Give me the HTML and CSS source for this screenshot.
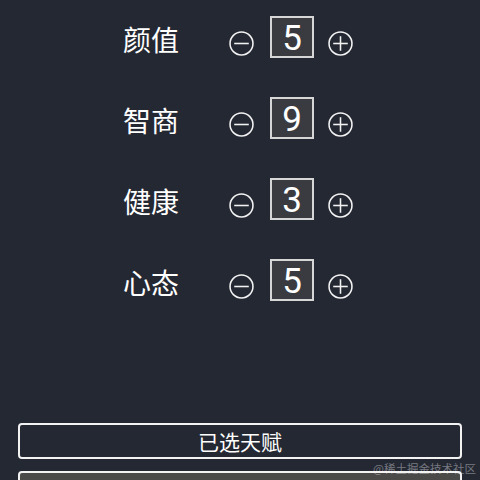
FILE: index.html
```html
<!DOCTYPE html>
<html lang="zh">
<head>
<meta charset="utf-8">
<link rel="stylesheet" href="styles.css">
</head>
<body>
<div class="page">
  <div class="rows">
    <div class="row">
      <span class="label">颜值</span>
      <svg class="btn minus" viewBox="0 0 24 24"><circle cx="12" cy="12" r="11" /><line x1="5" y1="12" x2="19" y2="12" /></svg>
      <span class="val">5</span>
      <svg class="btn plus" viewBox="0 0 24 24"><circle cx="12" cy="12" r="11" /><line x1="5" y1="12" x2="19" y2="12" /><line x1="12" y1="5" x2="12" y2="19" /></svg>
    </div>
    <div class="row">
      <span class="label">智商</span>
      <svg class="btn minus" viewBox="0 0 24 24"><circle cx="12" cy="12" r="11" /><line x1="5" y1="12" x2="19" y2="12" /></svg>
      <span class="val">9</span>
      <svg class="btn plus" viewBox="0 0 24 24"><circle cx="12" cy="12" r="11" /><line x1="5" y1="12" x2="19" y2="12" /><line x1="12" y1="5" x2="12" y2="19" /></svg>
    </div>
    <div class="row">
      <span class="label">健康</span>
      <svg class="btn minus" viewBox="0 0 24 24"><circle cx="12" cy="12" r="11" /><line x1="5" y1="12" x2="19" y2="12" /></svg>
      <span class="val">3</span>
      <svg class="btn plus" viewBox="0 0 24 24"><circle cx="12" cy="12" r="11" /><line x1="5" y1="12" x2="19" y2="12" /><line x1="12" y1="5" x2="12" y2="19" /></svg>
    </div>
    <div class="row">
      <span class="label">心态</span>
      <svg class="btn minus" viewBox="0 0 24 24"><circle cx="12" cy="12" r="11" /><line x1="5" y1="12" x2="19" y2="12" /></svg>
      <span class="val">5</span>
      <svg class="btn plus" viewBox="0 0 24 24"><circle cx="12" cy="12" r="11" /><line x1="5" y1="12" x2="19" y2="12" /><line x1="12" y1="5" x2="12" y2="19" /></svg>
    </div>
  </div>
  <div class="actions">
    <div class="action">已选天赋</div>
    <div class="action primary">今天开始重开我的精彩人生</div>
  </div>
  <div class="watermark">@稀土掘金技术社区</div>
</div>
</body>
</html>
```
FILE: styles.css
```css
html, body {
  margin: 0;
  padding: 0;
  background: #242833;
}
.page {
  position: relative;
  width: 480px;
  height: 480px;
  overflow: hidden;
  background: #242833;
  font-family: "Noto Sans CJK SC", "Noto Sans", sans-serif;
  color: #ffffff;
}
.rows {
  display: flex;
  flex-direction: column;
}
.row {
  height: 81px;
  display: flex;
  align-items: center;
  padding-left: 123px;
}
.label {
  width: 56px;
  font-size: 28px;
  line-height: 1;
  white-space: nowrap;
  margin-bottom: 4px;
}
.btn {
  width: 25px;
  height: 25px;
  fill: none;
  stroke: #f2f2f2;
  stroke-width: 1.5;
  margin-top: 6px;
}
.minus {
  margin-left: 50px;
}
.val {
  box-sizing: border-box;
  width: 44px;
  height: 42px;
  margin: 0 14px 7px 16px;
  padding-top: 3px;
  border: 2px solid #d6d6d6;
  background: #3a3b40;
  display: flex;
  align-items: center;
  justify-content: center;
  font-family: Roboto, "Liberation Sans", sans-serif;
  font-size: 35px;
  line-height: 34px;
  color: #ffffff;
}
.actions {
  margin-top: 99px;
  padding: 0 18px;
  display: flex;
  flex-direction: column;
  gap: 12px;
}
.action {
  box-sizing: border-box;
  height: 36px;
  border: 2px solid #f2f2f2;
  border-radius: 4px;
  display: flex;
  align-items: center;
  justify-content: center;
  font-size: 21px;
  line-height: 1;
  color: #ffffff;
}
.action.primary {
  background: #4a4a48;
}
.watermark {
  position: absolute;
  right: 4px;
  top: 461px;
  font-size: 11.5px;
  line-height: 14px;
  color: rgba(255, 255, 255, 0.38);
  white-space: nowrap;
}
```
